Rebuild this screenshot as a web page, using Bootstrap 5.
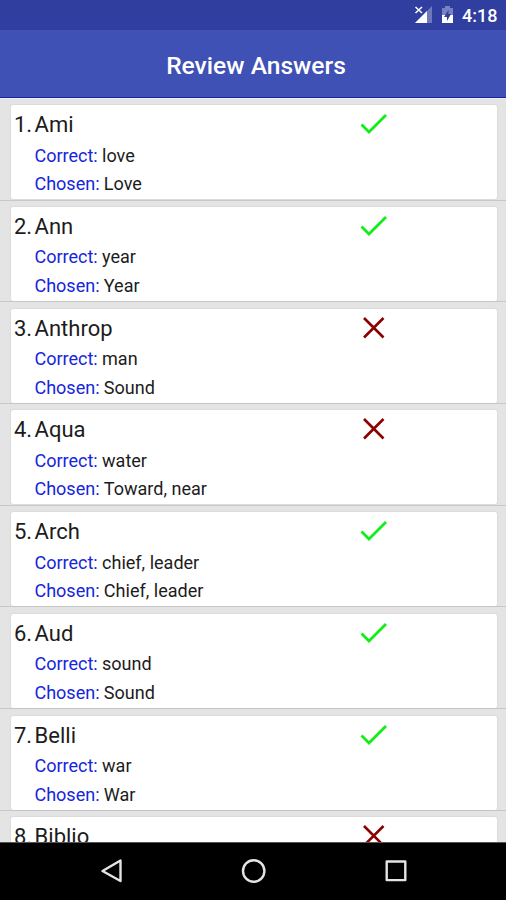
<!DOCTYPE html>
<html lang="en">
<head>
<meta charset="utf-8">
<meta name="viewport" content="width=device-width, initial-scale=1">
<title>Review Answers</title>
<link href="https://cdn.jsdelivr.net/npm/bootstrap@5.3.0/dist/css/bootstrap.min.css" rel="stylesheet">
<style>
body{font-family:Roboto,sans-serif;color:#1c1c1c;background:#e4e4e4;height:900px}
.status-strip{height:30px;background:#303f9f;padding-right:9px;font-size:18px;line-height:30px}
.status-strip .clock{font-weight:500;width:35px;padding-top:2px}
.app-header{height:68px;background:#3f51b5;border-bottom:1px solid #1427a0}
.app-header h1{font-size:24.6px;font-weight:500;line-height:30px;padding:4px 0 0 6px}
.answers{min-height:0;border-top:1px solid #eceef8}
.answer-item{height:101.7px;padding:6.4px 9.5px 0 11px;border-bottom:1px solid #c8c8c8}
.answer-card{height:94px;border-radius:2px;box-shadow:0 0 1.5px #bbb;padding-left:3px}
.answer-card .num{width:20.6px}
.word-line{height:36.4px;font-size:22px;line-height:39px}
.detail{font-size:18.05px;line-height:28.6px;padding-left:20.4px}
.detail .key{color:#1626dc;margin-right:4.3px}
.result{width:30px;height:30px;margin:4px 108px 0 auto}
.nav-strip{height:58px;border-top:1px solid #555}
</style>
<script src="https://cdn.jsdelivr.net/npm/bootstrap@5.3.0/dist/js/bootstrap.bundle.min.js"></script>
</head>
<body class="d-flex flex-column overflow-hidden m-0">
<svg class="d-none">
<symbol id="ok" viewBox="0 0 30 30"><path d="M2.5 15.5 10 23 27 6" fill="none" stroke="#10ee18" stroke-width="2.8"/></symbol>
<symbol id="no" viewBox="0 0 30 30"><path d="M5 5 24.5 24.5M24.5 5 5 24.5" fill="none" stroke="#8b0000" stroke-width="2.6"/></symbol>
</svg>
<div class="status-strip d-flex justify-content-end align-items-center text-white flex-shrink-0">
<svg width="19" height="20" viewBox="0 0 19 20"><path d="M18 1V18H1Z" fill="#fff" opacity=".3"/><path d="M13 6V18H1Z" fill="#fff"/><path d="M1 1 8 8M8 1 1 8" stroke="#303f9f" stroke-width="4"/><path d="M1.5 2 8 8M8 2 1.5 8" stroke="#fff" stroke-width="1.5"/></svg>
<svg class="ms-2" width="13" height="20" viewBox="0 0 13 20"><path d="M1 3h3V1h5v2h3v7H1Z" fill="#fff" opacity=".35"/><path d="M1 10h11v8H1Z" fill="#fff"/><path d="M7.5 5 3 12h3v4l4-7H7.5Z" fill="#303f9f"/></svg>
<span class="clock ms-2">4:18</span>
</div>
<header class="app-header d-flex align-items-center justify-content-center text-white flex-shrink-0"><h1 class="m-0">Review Answers</h1></header>
<main class="answers flex-grow-1 overflow-hidden" id="answers"></main>
<nav class="nav-strip d-flex bg-black flex-shrink-0 justify-content-center" aria-label="System">
<svg width="506" height="57" viewBox="0 0 506 57" fill="none" stroke="#e4e4e4" stroke-width="2.4" stroke-linejoin="round"><path d="M120.5 17.5V38L102.5 28Z"/><circle cx="253.7" cy="28" r="10.7"/><rect x="386.7" y="18.5" width="18.6" height="18.6"/></svg>
</nav>
<script>
const answers = [
  ["Ami","love","Love",true],["Ann","year","Year",true],["Anthrop","man","Sound",false],
  ["Aqua","water","Toward, near",false],["Arch","chief, leader","Chief, leader",true],
  ["Aud","sound","Sound",true],["Belli","war","War",true],["Biblio","","",false]
];
const detail = (key, value) => value
  ? `<div class="detail d-flex"><span class="key">${key}:</span><span>${value}</span></div>` : "";
document.getElementById("answers").innerHTML = answers.map(([word, correct, chosen, ok], i) => `
<div class="answer-item"><div class="answer-card bg-white">
<div class="word-line d-flex"><span class="num">${i + 1}.</span><span>${word}</span><svg class="result"><use href="#${ok ? "ok" : "no"}"/></svg></div>
${detail("Correct", correct)}${detail("Chosen", chosen)}
</div></div>`).join("");
</script>
</body>
</html>
